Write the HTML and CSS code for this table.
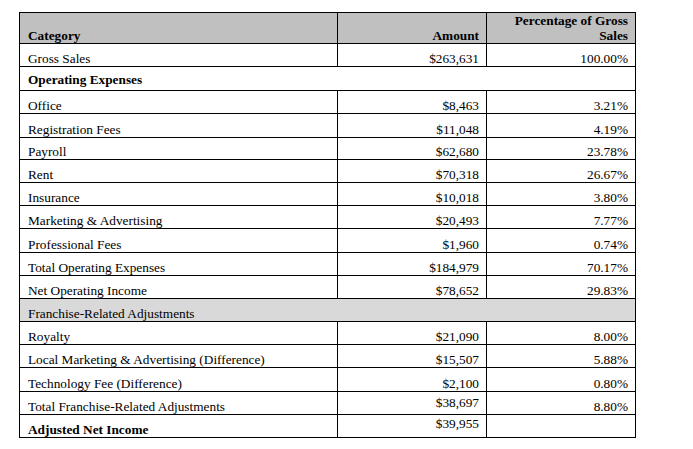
FILE: index.html
```html
<!DOCTYPE html>
<html>
<head>
<meta charset="utf-8">
<link rel="stylesheet" href="styles.css">
</head>
<body>
<div class="page">
<table class="report">
  <colgroup>
    <col class="c-cat">
    <col class="c-amt">
    <col class="c-pct">
  </colgroup>
  <thead>
    <tr class="head">
      <th class="lbl">Category</th>
      <th class="num">Amount</th>
      <th class="num">Percentage of Gross Sales</th>
    </tr>
  </thead>
  <tbody>
    <tr><td>Gross Sales</td><td class="num">$263,631</td><td class="num">100.00%</td></tr>
    <tr class="h24 section"><td colspan="3" class="bold lift">Operating Expenses</td></tr>
    <tr><td>Office</td><td class="num">$8,463</td><td class="num">3.21%</td></tr>
    <tr class="h24"><td>Registration Fees</td><td class="num">$11,048</td><td class="num">4.19%</td></tr>
    <tr class="h22"><td>Payroll</td><td class="num">$62,680</td><td class="num">23.78%</td></tr>
    <tr><td>Rent</td><td class="num">$70,318</td><td class="num">26.67%</td></tr>
    <tr><td>Insurance</td><td class="num">$10,018</td><td class="num">3.80%</td></tr>
    <tr><td>Marketing &amp; Advertising</td><td class="num">$20,493</td><td class="num">7.77%</td></tr>
    <tr class="h24"><td>Professional Fees</td><td class="num">$1,960</td><td class="num">0.74%</td></tr>
    <tr><td>Total Operating Expenses</td><td class="num">$184,979</td><td class="num">70.17%</td></tr>
    <tr><td>Net Operating Income</td><td class="num">$78,652</td><td class="num">29.83%</td></tr>
    <tr class="shaded"><td colspan="3">Franchise-Related Adjustments</td></tr>
    <tr><td>Royalty</td><td class="num">$21,090</td><td class="num">8.00%</td></tr>
    <tr><td>Local Marketing &amp; Advertising (Difference)</td><td class="num">$15,507</td><td class="num">5.88%</td></tr>
    <tr class="h24"><td>Technology Fee (Difference)</td><td class="num">$2,100</td><td class="num">0.80%</td></tr>
    <tr><td>Total Franchise-Related Adjustments</td><td class="num raise4">$38,697</td><td class="num">8.80%</td></tr>
    <tr><td class="bold">Adjusted Net Income</td><td class="num raise6">$39,955</td><td class="num"></td></tr>
  </tbody>
</table>
</div>
</body>
</html>
```

FILE: styles.css
```css
html, body {
  margin: 0;
  padding: 0;
  background: #ffffff;
}

.page {
  padding: 12px 0 0 19px;
}

.report {
  border-collapse: collapse;
  table-layout: fixed;
  width: 616px;
  font-family: "Liberation Serif", "Times New Roman", serif;
  font-size: 13.3px;
  line-height: 15px;
  color: #000;
}

.c-cat { width: 318px; }
.c-amt { width: 149px; }
.c-pct { width: 149px; }

.report th,
.report td {
  border: 1px solid #000;
  padding: 0 7px 0 8px;
  height: 22px;
  vertical-align: bottom;
  text-align: left;
  font-weight: normal;
}

.report .head th {
  background: #c0c0c0;
  font-weight: bold;
  height: 30px;
  padding-bottom: 0;
}

.report th.num,
.report td.num {
  text-align: right;
}

.report .h24 td { height: 23px; }
.report .h22 td { height: 21px; }

.report td.bold { font-weight: bold; }

.report .h24 td.lift { padding-bottom: 3px; height: 20px; }

.report .shaded td { background: #d9d9d9; }

.report td.raise4 { padding-bottom: 4px; height: 18px; }
.report td.raise6 { padding-bottom: 6px; height: 16px; }
```
